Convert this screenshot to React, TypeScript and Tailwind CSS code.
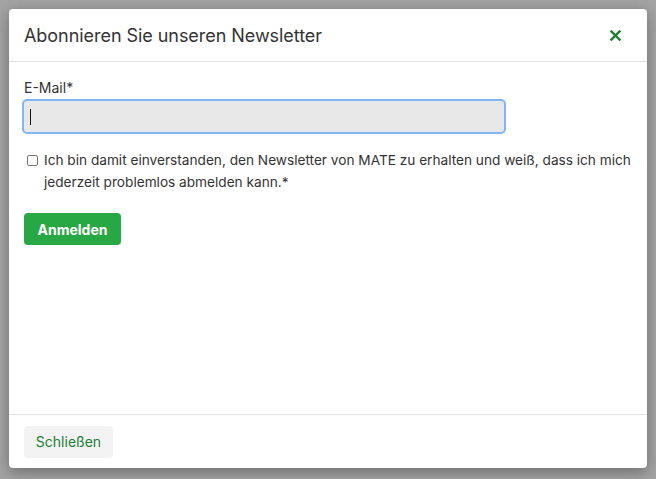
import React from "react";

export default function App() {
  return (
    <div
      className="h-[479px] w-[656px] bg-[#a4a4a4] pl-[9px] pt-[9px] overflow-hidden"
      style={{ fontFamily: "Inter, 'Noto Sans', sans-serif" }}
    >
      <div className="flex h-[459px] w-[638px] flex-col rounded-[4px] bg-white shadow-[0_4px_16px_rgba(0,0,0,0.35)]">
        <div className="flex h-[53px] shrink-0 items-center justify-between border-b border-[#dee2e6] pl-[15px] pr-[26px]">
          <span className="text-[18px] text-[#333] tracking-[-0.05px]">Abonnieren Sie unseren Newsletter</span>
          <svg width="11" height="11" viewBox="0 0 11 11">
            <path d="M1.5 1.5 L9.5 9.5 M9.5 1.5 L1.5 9.5" stroke="#1e7e34" strokeWidth="2.4" strokeLinecap="square" />
          </svg>
        </div>
        <div className="flex-1 px-[15px] pt-[15px] text-[14px] text-[#333]">
          <div className="leading-[21px]">E-Mail*</div>
          <div className="-ml-[2px] mt-[1px] flex h-[35px] w-[484px] items-center rounded-[5px] border-[2px] border-[#80b7f5] bg-[#e8e8e8] pl-[6px]">
            <div className="h-[16px] w-[1px] bg-[#111]" />
          </div>
          <div className="mt-[15px] -mr-[8px] flex">
            <div className="mt-[6px] ml-[3px] h-[11px] w-[11px] shrink-0 rounded-[2px] border border-[#777] bg-white" />
            <p className="ml-[6px] text-[13.65px] leading-[22px] text-[#333]">
              Ich bin damit einverstanden, den Newsletter von MATE zu erhalten und weiß, dass ich mich jederzeit problemlos abmelden kann.*
            </p>
          </div>
          <button className="mt-[20px] flex h-[32px] w-[97px] items-center justify-center rounded-[4px] bg-[#28a745] text-[14px] font-bold text-white">
            Anmelden
          </button>
        </div>
        <div className="flex h-[54px] shrink-0 items-center border-t border-[#dee2e6] px-[15px]">
          <button className="flex h-[32px] w-[89px] items-center justify-center rounded-[4px] bg-[#f3f3f3] text-[14px] text-[#1e7e34]">
            Schließen
          </button>
        </div>
      </div>
    </div>
  );
}
